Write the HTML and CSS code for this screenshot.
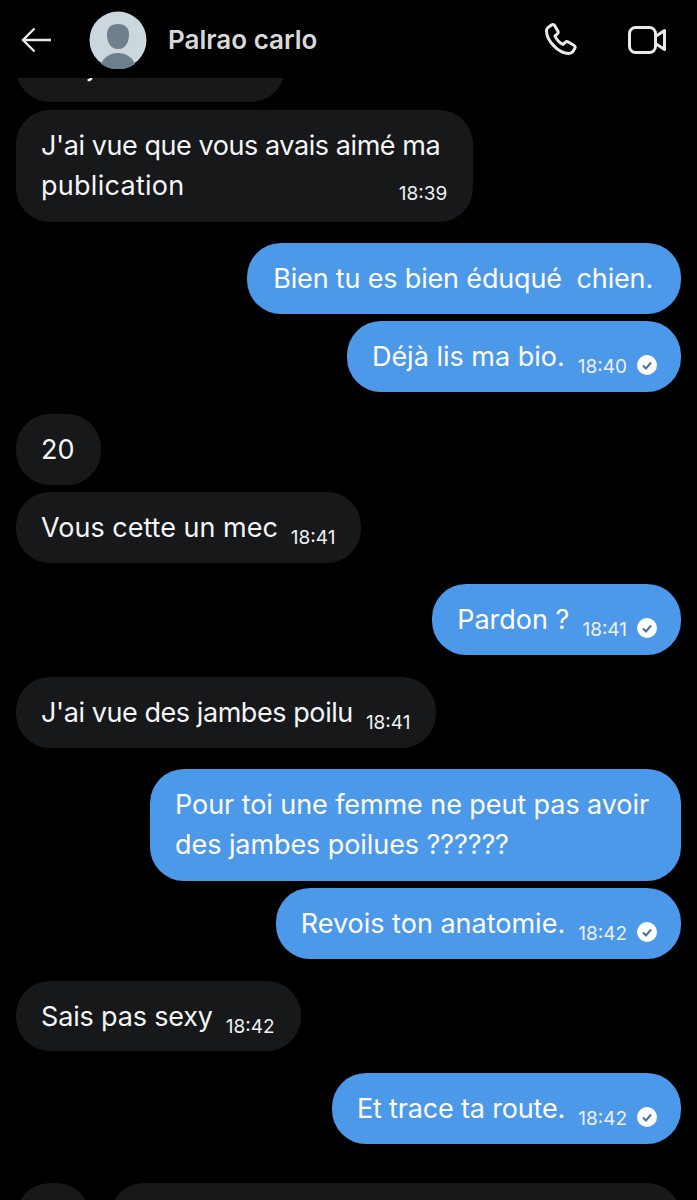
FILE: index.html
```html
<!DOCTYPE html>
<html lang="fr">
<head>
<meta charset="utf-8">
<title>Palrao carlo</title>
<link rel="stylesheet" href="styles.css">
</head>
<body>
<div class="screen">
  <header class="topbar">
    <svg class="back" viewBox="0 0 30 26" width="30" height="26"><path d="M30 13H2.500M13.500 1.500 2 13l11.500 11.500" fill="none" stroke="#e7e9ea" stroke-width="2.400"/></svg>
    <div class="avatar">
      <svg viewBox="0 0 58 58" width="58" height="58"><circle cx="29" cy="29" r="28.500" fill="#ccd6dd"/><path d="M29 13c-7 0-11 4-11 10 0 9 4 15 11 15s11-6 11-15c0-6-4-10-11-10z" fill="#6e7f8e"/><path d="M12 53c3-7 9-11 17-11s14 4 17 11a28.500 28.500 0 0 1-34 0z" fill="#6e7f8e"/></svg>
    </div>
    <div class="name">Palrao carlo</div>
    <div class="actions">
      <svg class="phone" viewBox="0 0 33 33" width="33" height="33"><path d="M3 4.500 6.500 2c1.200-.8 2.600-.5 3.300.7l3 5.300c.6 1 .4 2.200-.5 3l-2.300 2c1.500 3.600 4.300 6.700 8 8.500l2.300-2.200c.9-.8 2-.9 3-.3l5.500 3.200c1.200.7 1.600 2 1 3.200-1.200 2.500-3.300 5.100-6 5.100C13 30.500 1.500 17 1.500 8c0-1.300.5-2.600 1.500-3.500z" fill="none" stroke="#e7e9ea" stroke-width="3" stroke-linejoin="round"/></svg>
      <svg class="video" viewBox="0 0 38 28" width="38" height="28"><rect x="1.500" y="1.500" width="26" height="25" rx="6" fill="none" stroke="#e7e9ea" stroke-width="3"/><path d="M27.500 10.500 36.500 4.500v19L27.500 17.500" fill="none" stroke="#e7e9ea" stroke-width="3" stroke-linejoin="round"/></svg>
    </div>
  </header>
  <main class="thread">
    <div class="bubble in clipped">j</div>
    <div class="bubble in first wide">
      <div class="body"><span class="snug">J'ai vue que vous avais aimé ma</span><br><span class="loose">publication</span></div>
      <div class="meta"><span class="time">18:39</span></div>
    </div>
    <div class="bubble out far no-time"><span class="body slight">Bien tu es bien éduqué&nbsp; chien.</span></div>
    <div class="bubble out tight ticked"><span class="body">Déjà lis ma bio.</span><span class="time">18:40</span><svg class="tick" viewBox="0 0 20 20" width="20" height="20"><circle cx="10" cy="10" r="10" fill="#fff"/><path d="m6 10.500 3 3 5-6" fill="none" stroke="#4c6f94" stroke-width="2"/></svg></div>
    <div class="bubble in far"><span class="body">20</span></div>
    <div class="bubble in tight"><span class="body">Vous cette un mec</span><span class="time">18:41</span></div>
    <div class="bubble out far ticked"><span class="body">Pardon ?</span><span class="time">18:41</span><svg class="tick" viewBox="0 0 20 20" width="20" height="20"><circle cx="10" cy="10" r="10" fill="#fff"/><path d="m6 10.500 3 3 5-6" fill="none" stroke="#4c6f94" stroke-width="2"/></svg></div>
    <div class="bubble in far"><span class="body snug">J'ai vue des jambes poilu</span><span class="time">18:41</span></div>
    <div class="bubble out far wide no-time"><div class="body hair">Pour toi une femme ne peut pas avoir<br>des jambes poilues ??????</div></div>
    <div class="bubble out tight ticked"><span class="body">Revois ton anatomie.</span><span class="time">18:42</span><svg class="tick" viewBox="0 0 20 20" width="20" height="20"><circle cx="10" cy="10" r="10" fill="#fff"/><path d="m6 10.500 3 3 5-6" fill="none" stroke="#4c6f94" stroke-width="2"/></svg></div>
    <div class="bubble in far"><span class="body slight">Sais pas sexy</span><span class="time">18:42</span></div>
    <div class="bubble out far ticked"><span class="body slight">Et trace ta route.</span><span class="time">18:42</span><svg class="tick" viewBox="0 0 20 20" width="20" height="20"><circle cx="10" cy="10" r="10" fill="#fff"/><path d="m6 10.500 3 3 5-6" fill="none" stroke="#4c6f94" stroke-width="2"/></svg></div>
    <div class="last-row">
      <div class="stub small"></div>
      <div class="stub large"></div>
    </div>
  </main>
</div>
</body>
</html>
```
FILE: styles.css
```css
* { box-sizing: border-box; }
html, body { margin: 0; padding: 0; background: #000; }
.screen {
  width: 697px;
  height: 1200px;
  overflow: hidden;
  display: flex;
  flex-direction: column;
  background: #000;
  font-family: Inter, "Liberation Sans", sans-serif;
  color: #e7e9ea;
}
.topbar {
  flex: none;
  height: 78px;
  display: flex;
  align-items: center;
  padding: 1px 31px 0 21px;
}
.back { margin-right: 38px; }
.avatar { width: 58px; height: 58px; margin-right: 21px; }
.avatar svg, .back, .phone, .video { display: block; }
.name { font-size: 26px; font-weight: 600; color: #d9d9d9; }
.actions { margin-left: auto; display: flex; align-items: center; gap: 50px; }
.thread {
  flex: 1;
  min-height: 0;
  overflow: hidden;
  display: flex;
  flex-direction: column;
  padding: 0 16px;
}
.bubble {
  flex: none;
  display: flex;
  align-items: flex-end;
  min-height: 70.750px;
  padding: 16px 26px 14.750px 25px;
  border-radius: 34px;
  font-size: 27px;
  line-height: 40px;
  color: #f3f5f6;
}
.wide { flex-direction: column; align-items: stretch; padding-bottom: 15.500px; }
.in { align-self: flex-start; background: #16181a; }
.out { align-self: flex-end; background: #4c98e9; color: #fff; }
.first { margin-top: 8px; padding-right: 33px; }
.tight { margin-top: 7.250px; }
.far { margin-top: 21.750px; }
.no-time { padding-left: 26px; padding-right: 28px; }
.no-time.wide { padding-left: 25px; padding-right: 32px; }
.ticked { padding-right: 24px; }
.clipped { margin-top: -47px; width: 269px; height: 71px; padding-left: 72px; }
.body { white-space: nowrap; }
.snug { letter-spacing: -0.43px; }
.slight { letter-spacing: -0.17px; }
.hair { letter-spacing: -0.08px; }
.loose { letter-spacing: 0.28px; }
.time {
  font-size: 19px;
  line-height: 24px;
  margin-left: 13px;
  margin-bottom: -2px;
  white-space: nowrap;
  color: #eef1f3;
}
.meta { display: flex; justify-content: flex-end; height: 0; margin-right: -7px; }
.meta .time { margin-top: -24px; margin-bottom: 0; }
.tick { margin-left: 10px; margin-bottom: 2px; flex: none; }
.last-row { display: flex; gap: 20px; margin-top: 39.250px; flex: none; }
.stub { height: 71px; background: #16181a; border-radius: 34px; flex: none; }
.small { width: 74px; }
.large { width: 571px; }
```
